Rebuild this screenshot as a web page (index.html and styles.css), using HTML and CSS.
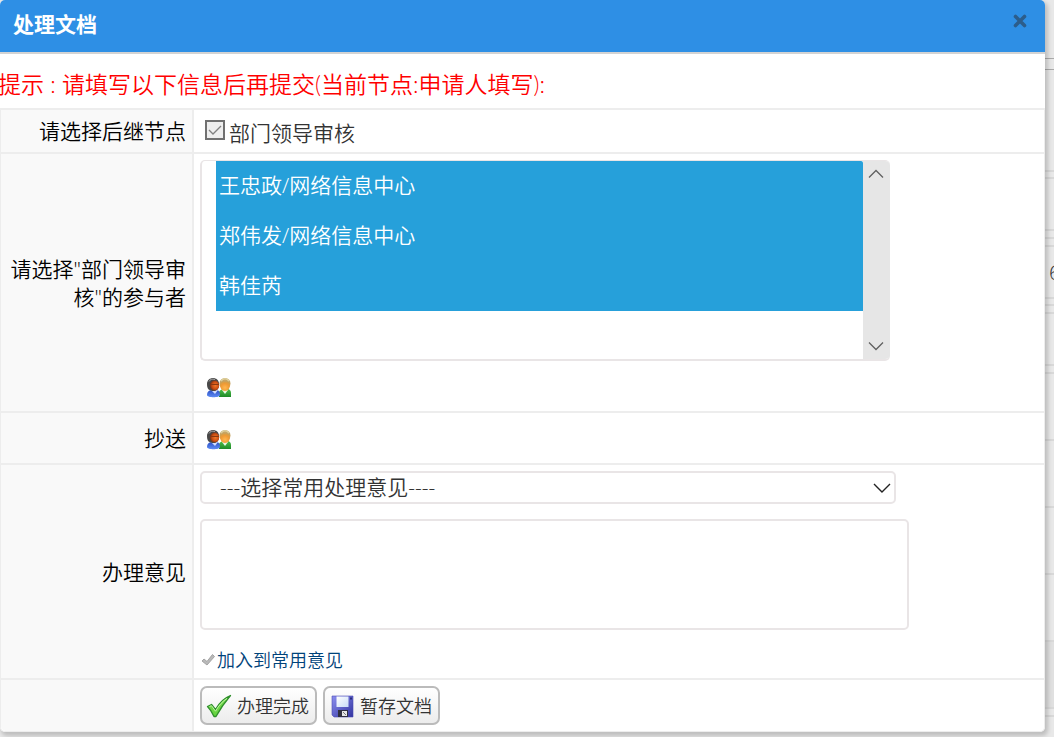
FILE: index.html
```
<!DOCTYPE html>
<html lang="zh-CN">
<head>
<meta charset="utf-8">
<title>处理文档</title>
<link rel="stylesheet" href="styles.css">
</head>
<body>
<svg width="0" height="0" class="sprites" aria-hidden="true">
  <defs>
    <radialGradient id="g-dark" cx=".6" cy=".5" r=".7"><stop offset="0" stop-color="#f07a2c"/><stop offset=".5" stop-color="#cc4e12"/><stop offset=".85" stop-color="#6a2e16"/><stop offset="1" stop-color="#444"/></radialGradient>
    <radialGradient id="g-fair" cx=".5" cy=".65" r=".7"><stop offset="0" stop-color="#ffb850"/><stop offset=".6" stop-color="#f09a34"/><stop offset="1" stop-color="#c9a050"/></radialGradient>
    <linearGradient id="g-blue" x2="0" y2="1"><stop offset="0" stop-color="#2a4fc4"/><stop offset="1" stop-color="#5f8cf4"/></linearGradient>
    <linearGradient id="g-green" x2="0" y2="1"><stop offset="0" stop-color="#4fbf4a"/><stop offset="1" stop-color="#1e8a28"/></linearGradient>
    <linearGradient id="g-tick" x2="0" y2="1"><stop offset="0" stop-color="#7fe055"/><stop offset="1" stop-color="#62d23c"/></linearGradient>
    <linearGradient id="g-disk" x2="1" y2="1"><stop offset="0" stop-color="#8c8ff0"/><stop offset="1" stop-color="#3234a0"/></linearGradient>
    <linearGradient id="g-label" x2="1" y2="1"><stop offset="0" stop-color="#fff"/><stop offset="1" stop-color="#c9dcf8"/></linearGradient>
    <symbol id="people" viewBox="0 0 26 22">
      <path d="M13 20v-4c0-3 3-4 5-4h3c3 0 4 2 4 4v4z" fill="url(#g-green)"/>
      <path d="M16 13l3 4 3-4z" fill="#e9f7e4"/>
      <ellipse cx="19" cy="6.500" rx="5.500" ry="5.500" fill="#c6a465"/>
      <path d="M14 6c2-2 8-2 10 0 .5 5-2 8-5 8s-5.500-3-5-8z" fill="url(#g-fair)"/>
      <path d="M15 4c2-3 6-3 8 0" fill="none" stroke="#ddd09c" stroke-width="1.500"/>
      <path d="M1 18c0-4 3-5 5-5h4c3 0 4 2 4 5 0 3-13 3-13 0z" fill="url(#g-blue)"/>
      <path d="M5 13l4 4 3-4z" fill="#cfdcff"/>
      <path d="M1 7c0-8 12-8 12 0 0 5-2 7-5 7-5 0-7-2-7-7z" fill="#484848"/>
      <ellipse cx="8.500" cy="8.500" rx="4.700" ry="5" fill="url(#g-dark)"/>
      <path d="M5 7.500h8" stroke="#8c3810"/>
      <path d="M3 4.500c1-2 3-3 6-2" fill="none" stroke="#a4a4a4"/>
    </symbol>
  </defs>
</svg>
<main class="dialog" role="dialog" aria-labelledby="dialog-title">
  <header class="dialog-head">
    <h1 id="dialog-title">处理文档</h1>
    <button class="close" type="button" aria-label="关闭">
      <svg width="14" height="14" viewBox="0 0 14 14" aria-hidden="true"><path d="M2.500 2.500l9 9m0-9l-9 9" stroke="#2c5d8b" stroke-width="3.600" stroke-linecap="round"/></svg>
    </button>
  </header>
  <p class="hint">提示 : 请填写以下信息后再提交(当前节点:申请人填写):</p>
  <form class="form">
    <div class="row">
      <div class="name">请选择后继节点</div>
      <div class="field next">
        <label class="check"><input type="checkbox" checked>部门领导审核</label>
      </div>
    </div>
    <div class="row">
      <label class="name" for="people-list">请选择"部门领导审核"的参与者</label>
      <div class="field members">
        <div class="listbox">
          <select id="people-list" multiple size="4">
            <option selected>王忠政/网络信息中心</option>
            <option selected>郑伟发/网络信息中心</option>
            <option selected>韩佳芮</option>
          </select>
          <div class="scroll" aria-hidden="true">
            <svg width="16" height="10" viewBox="0 0 16 10"><path d="M1 8.500l7-7 7 7" fill="none" stroke="#606060" stroke-width="1.300"/></svg>
            <svg width="16" height="10" viewBox="0 0 16 10"><path d="M1 1.500l7 7 7-7" fill="none" stroke="#606060" stroke-width="1.300"/></svg>
          </div>
        </div>
        <button class="pick" type="button" aria-label="选择参与者"><svg width="26" height="22"><use href="#people"/></svg></button>
      </div>
    </div>
    <div class="row">
      <div class="name">抄送</div>
      <div class="field copy">
        <button class="pick" type="button" aria-label="选择抄送人"><svg width="26" height="22"><use href="#people"/></svg></button>
      </div>
    </div>
    <div class="row">
      <label class="name" for="opinion">办理意见</label>
      <div class="field opinion">
        <div class="combo">
          <select aria-label="常用处理意见"><option>---选择常用处理意见----</option></select>
          <svg class="arrow" width="18" height="10" viewBox="0 0 18 10" aria-hidden="true"><path d="M1 1l8 8 8-8" fill="none" stroke="#222" stroke-width="1.400"/></svg>
        </div>
        <textarea id="opinion"></textarea>
        <a class="add" href="#"><svg width="16" height="14" viewBox="0 0 16 14" aria-hidden="true"><path d="M2 8l2-2 3 2.500L12.500 1.500l2 2L7 12z" fill="#b9b9b9" stroke="#a4a4a4" stroke-linejoin="round"/></svg>加入到常用意见</a>
      </div>
    </div>
    <div class="row">
      <div class="name"></div>
      <div class="field actions">
        <button class="btn" type="button">
          <svg width="26" height="24" viewBox="0 0 26 24" aria-hidden="true"><path d="M1.500 12.500l4-2 4 5C13 9 18 4 24.500 1.500 19 8 14 15 10 22.500H8C6 18 4 15 1.500 12.500z" fill="url(#g-tick)" stroke="#2f8f2c" stroke-width="1.300" stroke-linejoin="round"/><path d="M3.500 12.500l2-.8 4 5.500C13 11 17 7 21 4.500" fill="none" stroke="#c0f3a4"/></svg>
          办理完成
        </button>
        <button class="btn" type="button">
          <svg width="26" height="24" viewBox="0 0 26 24" aria-hidden="true"><path d="M3 2h21v21H5l-2-2z" fill="url(#g-disk)" stroke="#4a4cb4" stroke-width=".6"/><path d="M7.500 2.500h12V13h-12z" fill="url(#g-label)"/><path d="M21 3.500h2v2h-2z" fill="#292c7c"/><path d="M9 16h10v7H9z" fill="#303040"/><path d="M13 17h5v5h-5z" fill="#e6e6e6"/><path d="M14 18l3 3" stroke="#777"/></svg>
          暂存文档
        </button>
      </div>
    </div>
  </form>
</main>
<div class="behind" aria-hidden="true">
  <i class="h59 strong"></i><i class="h11 strong"></i><i class="h102"></i><i class="h7"></i><i class="h52"></i><i class="h8"></i><i class="h8"></i><i class="h52">6</i><i class="h7"></i><i class="h8"></i><i class="h52"></i><i class="h8"></i><i class="h67"></i><i class="h67"></i><i class="h67"></i><i class="h67"></i><i class="h67 dark"></i><i class="h8"></i>
</div>
</body>
</html>
```
FILE: styles.css
```
* { box-sizing: border-box; }

body {
  margin: 0;
  min-height: 100vh;
  display: flex;
  align-items: flex-start;
  overflow: hidden;
  background: #e8e8e8;
  color: #333;
  font: 350 21px/28px "Open Sans", "Noto Sans CJK SC", sans-serif;
}

button, select, option, textarea { font: inherit; color: inherit; }
svg { display: block; flex: none; }
.sprites { position: absolute; }

.dialog {
  position: relative;
  z-index: 1;
  flex: 1;
  min-width: 0;
  background: #fff;
  border-radius: 5px;
  box-shadow: 2px 3px 4px 1px rgba(0, 0, 0, .18);
}

.dialog-head {
  display: flex;
  justify-content: space-between;
  align-items: flex-start;
  height: 54px;
  padding: 10px 18px 0 13px;
  background: #2e8fe5;
  border-bottom: 2px solid #d3d3d3;
  border-radius: 5px 5px 0 0;
}
.dialog-head h1 {
  margin: 0;
  color: #fff;
  font-size: 21px;
  font-weight: 700;
  line-height: 28px;
}
.close {
  margin-top: 4px;
  padding: 0;
  border: 0;
  background: none;
}

.hint {
  margin: 0 0 0 -2px;
  padding: 16px 0 10px;
  color: #f00;
  font-family: Lato, "Noto Sans CJK SC", sans-serif;
  font-size: 23px;
  line-height: 28px;
}

.form {
  border: 1px solid #ededed;
  border-top-width: 2px;
  border-radius: 0 0 5px 5px;
}
.row {
  display: grid;
  grid-template-columns: 193px 1fr;
  border-bottom: 2px solid #ededed;
}
.row:last-child { border-bottom: 0; }
.name {
  display: flex;
  align-items: center;
  justify-content: flex-end;
  padding: 0 6px 0 5px;
  border-right: 2px solid #ededed;
  background: #f9f9f9;
  color: #000;
  text-align: right;
}
.row:last-child .name { border-bottom-left-radius: 5px; }
.field {
  min-width: 0;
  padding: 6px;
}

.next { padding: 7px 11px; }
.check {
  display: flex;
  gap: 4px;
  height: 28px;
  padding-top: 2px;
}
.check input {
  appearance: none;
  width: 20px;
  height: 20px;
  margin: 1px 0 0;
  border: 2px solid #707070;
  background: #eee url("data:image/svg+xml,%3Csvg xmlns='http://www.w3.org/2000/svg' viewBox='0 0 16 16'%3E%3Cpath d='M2 8l4 4 8-8' fill='none' stroke='%23808080' stroke-width='1.3'/%3E%3C/svg%3E");
}

.members { padding-bottom: 12px; }
.listbox {
  display: flex;
  width: 690px;
  max-width: 100%;
  height: 201px;
  margin-bottom: 16px;
  border: 2px solid #e9e5e6;
  border-width: 1px 0 2px 2px;
  border-radius: 5px;
  background: #fff;
  overflow: hidden;
}
.listbox select {
  flex: 1;
  height: 198px;
  padding: 0 0 0 14px;
  border: 0;
  outline: 0;
  background: none;
  overflow: hidden;
}
.listbox option {
  height: 50px;
  padding: 8px 3px 0;
}
.listbox option:checked {
  background: linear-gradient(#26a0da, #26a0da);
  -webkit-text-fill-color: #fff;
}
.scroll {
  display: flex;
  flex-direction: column;
  justify-content: space-between;
  align-items: center;
  width: 27px;
  padding: 8px 1px 8px 0;
  background: #e6e6e6;
}
.pick {
  display: block;
  margin: 0 6px;
  padding: 0;
  border: 0;
  background: none;
}
.copy { padding: 16px 6px 12px; }

.combo {
  position: relative;
  width: 696px;
  max-width: 100%;
}
.combo select {
  display: block;
  appearance: none;
  width: 100%;
  height: 33px;
  padding: 0 18px 2px;
  border: 2px solid #e9e5e6;
  border-radius: 5px;
  background: #fff;
  line-height: 28px;
}
.combo .arrow {
  position: absolute;
  top: 12px;
  right: 5px;
}
.opinion textarea {
  display: block;
  width: 709px;
  max-width: 100%;
  height: 111px;
  margin: 15px 0 17px;
  border: 2px solid #e9e5e6;
  border-radius: 5px;
  resize: none;
}
.add {
  display: flex;
  align-items: center;
  gap: 1px;
  height: 25px;
  color: #00437a;
  font-size: 18px;
  text-decoration: none;
}

.actions {
  display: flex;
  gap: 6px;
}
.btn {
  display: flex;
  align-items: center;
  gap: 5px;
  height: 39px;
  padding: 0 6px 0 4px;
  border: 2px solid #bbb;
  border-radius: 7px;
  background: linear-gradient(#fff, #ececec);
  font-size: 18px;
}

.behind { width: 9px; }
.behind i {
  display: block;
  border-bottom: 2px solid #d8d8d8;
  padding-left: 4px;
  overflow: hidden;
  font-style: normal;
  line-height: 50px;
}
.behind .strong { border-bottom: 1px solid #aaa; }
.behind .dark { background: #e0e0e0; }
.h7 { height: 7px; }
.h8 { height: 8px; }
.h11 { height: 11px; }
.h52 { height: 52px; }
.h59 { height: 59px; }
.h67 { height: 67px; }
.h102 { height: 102px; }
```
